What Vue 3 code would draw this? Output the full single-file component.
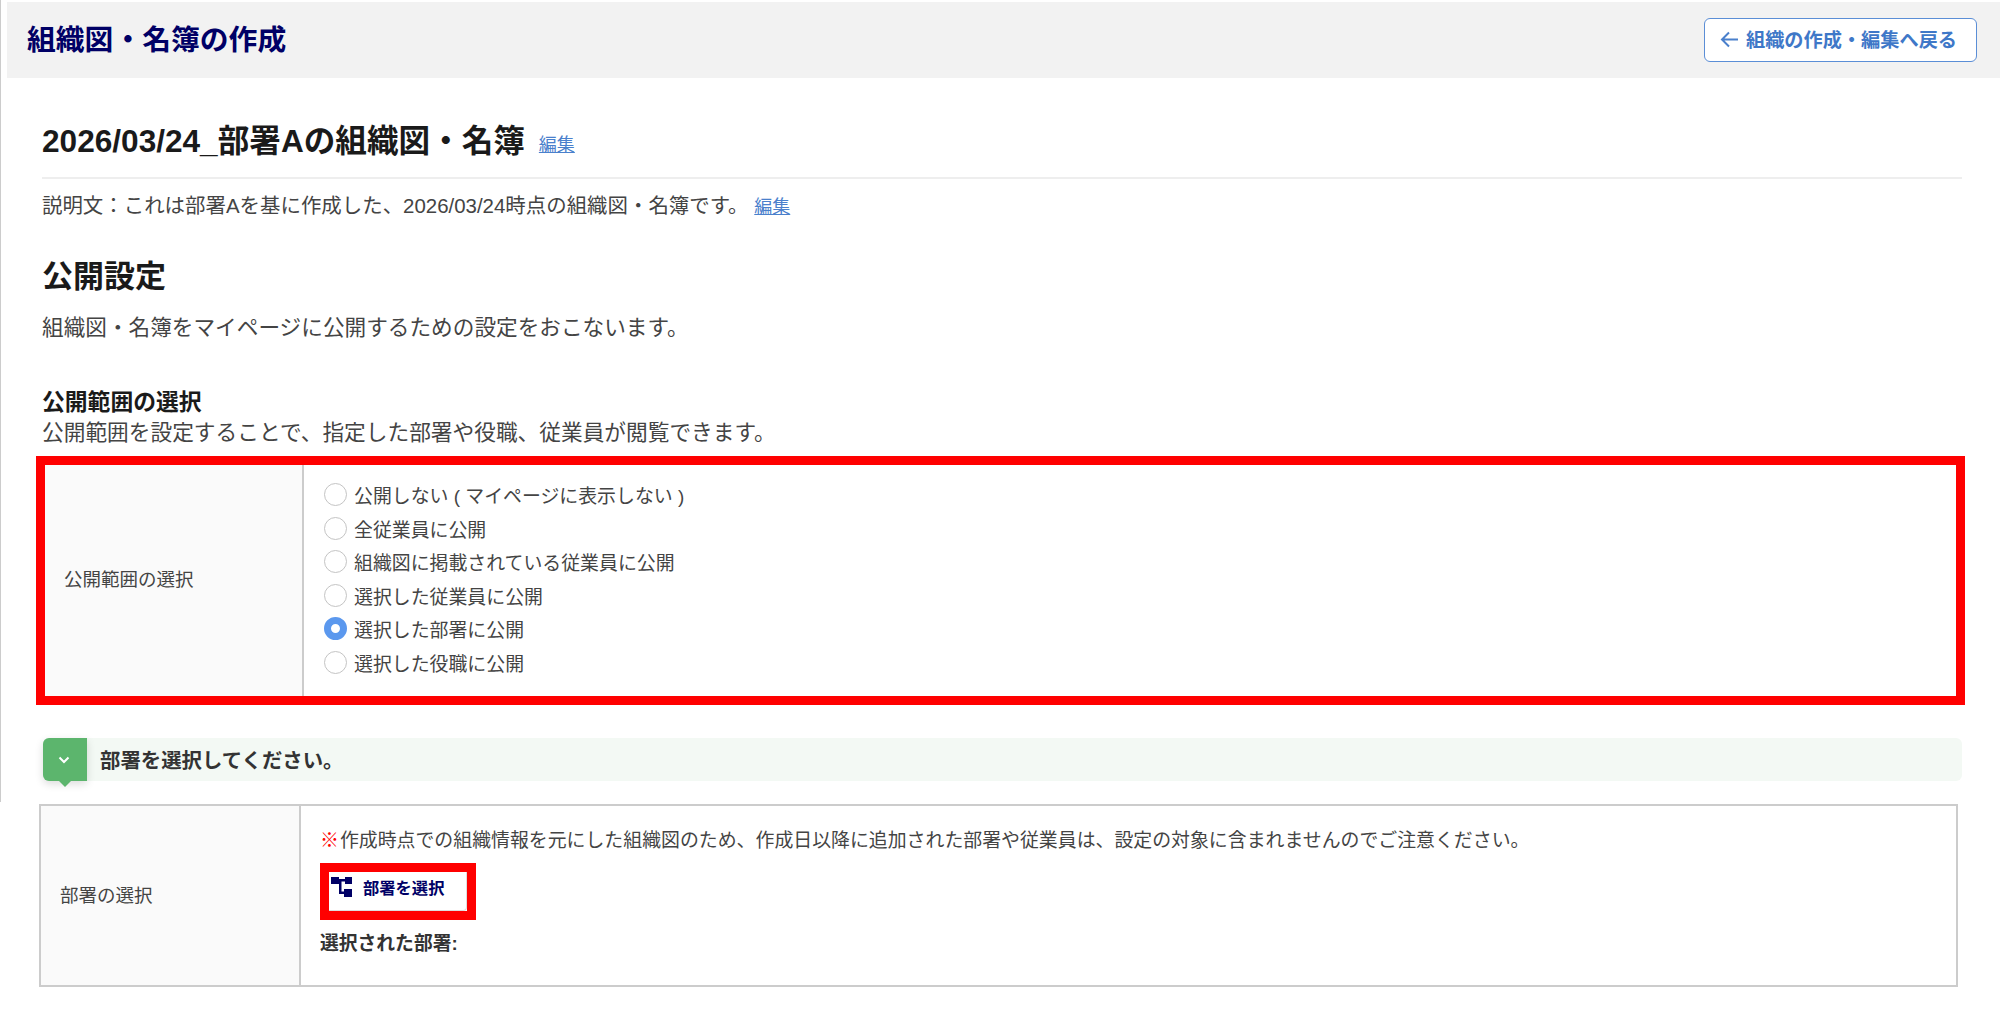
<script setup>
const options = [
  { label: '公開しない ( マイページに表示しない )', checked: false },
  { label: '全従業員に公開', checked: false },
  { label: '組織図に掲載されている従業員に公開', checked: false },
  { label: '選択した従業員に公開', checked: false },
  { label: '選択した部署に公開', checked: true },
  { label: '選択した役職に公開', checked: false },
]
</script>

<template>
  <div class="page">
    <div class="rail"></div>
    <header class="topbar">
      <h1 class="topbar-title">組織図・名簿の作成</h1>
      <button class="back" type="button">
        <svg width="18" height="17" viewBox="0 0 18 17" fill="none" stroke="#4a80cc" stroke-width="2">
          <path d="M18 8.500H2M9 1.500 2 8.500l7 7" />
        </svg>
        <span>組織の作成・編集へ戻る</span>
      </button>
    </header>

    <main class="main">
      <div class="doc-title">
        <h2>2026/03/24_部署Aの組織図・名簿</h2>
        <a class="edit">編集</a>
      </div>
      <p class="desc">説明文&#xFF1A;これは部署Aを基に作成した、2026/03/24時点の組織図・名簿です。 <a class="edit">編集</a></p>

      <h2 class="section">公開設定</h2>
      <p class="lead">組織図・名簿をマイページに公開するための設定をおこないます。</p>

      <h3 class="sub">公開範囲の選択</h3>
      <p class="sub-text">公開範囲を設定することで、指定した部署や役職、従業員が閲覧できます。</p>

      <div class="scope-box">
        <div class="row-label">公開範囲の選択</div>
        <div class="radios">
          <label v-for="o in options" :key="o.label" class="radio">
            <input type="radio" name="scope" :checked="o.checked" />
            <span>{{ o.label }}</span>
          </label>
        </div>
      </div>

      <div class="prompt">
        <div class="badge">
          <svg width="12" height="8" viewBox="0 0 12 8" fill="none" stroke="#fff" stroke-width="2">
            <path d="M1.500 1.500 6 6l4.500-4.500" />
          </svg>
        </div>
        <span>部署を選択してください。</span>
      </div>

      <div class="dept-table">
        <div class="row-label dept-label">部署の選択</div>
        <div class="dept-body">
          <p class="note"><span class="mark">※</span>作成時点での組織情報を元にした組織図のため、作成日以降に追加された部署や従業員は、設定の対象に含まれませんのでご注意ください。</p>
          <div class="pick-frame">
            <button class="pick" type="button">
              <svg width="21" height="20" viewBox="0 0 21 20" fill="#000066">
                <rect x="0" y="0" width="8" height="7" />
                <rect x="14" y="0" width="7" height="7" />
                <rect x="13" y="12" width="8" height="8" />
                <path d="M8 2h6v2.500h-3.500V14.500H13v2.500H8z" />
              </svg>
              <span>部署を選択</span>
            </button>
          </div>
          <p class="selected">選択された部署:</p>
        </div>
      </div>
    </main>
  </div>
</template>

<style scoped>
.page {
  position: relative;
  width: 2000px;
  height: 1012px;
  overflow: hidden;
  padding-top: 2px;
  box-sizing: border-box;
  background: #fff;
  color: #333;
  font-family: "Liberation Sans", "Noto Sans CJK JP", sans-serif;
}
.rail {
  position: absolute;
  left: 0;
  top: 0;
  width: 1px;
  height: 802px;
  background: #ccc;
}
h1, h2, h3, p { margin: 0; }
.topbar {
  margin-left: 7px;
  height: 76px;
  background: #f2f2f2;
  display: flex;
  align-items: center;
  justify-content: space-between;
  padding: 0 23px 0 20px;
}
.topbar-title {
  font-size: 28.800px;
  line-height: 40px;
  font-weight: 700;
  color: #000066;
}
.back {
  width: 273px;
  height: 44px;
  box-sizing: border-box;
  background: #fff;
  border: 1.500px solid #5b8ed6;
  border-radius: 6px;
  display: flex;
  align-items: center;
  gap: 8px;
  padding: 0 0 2px 15px;
  color: #3f78c8;
  font: inherit;
  font-size: 19.200px;
  font-weight: 700;
}
.main { padding: 0 38px 0 42px; }
.doc-title {
  height: 101px;
  padding-top: 27px;
  box-sizing: border-box;
  border-bottom: 2px solid #eee;
  display: flex;
  align-items: center;
  gap: 14px;
  color: #1a1a1a;
}
.doc-title h2 {
  font-size: 31.600px;
  line-height: 44px;
  font-weight: 700;
}
.edit {
  color: #4a80cc;
  font-size: 18px;
  text-decoration: underline;
  font-weight: 400;
}
.doc-title .edit { position: relative; top: 2px; }
.desc {
  margin-top: 12px;
  font-size: 20.450px;
  line-height: 30px;
  color: #444;
}
.section {
  margin-top: 33px;
  font-size: 31px;
  line-height: 44px;
  font-weight: 700;
  color: #1a1a1a;
}
.lead {
  margin-top: 13px;
  font-size: 21.650px;
  line-height: 32px;
  color: #444;
}
.sub {
  margin-top: 42px;
  font-size: 22.800px;
  line-height: 32px;
  font-weight: 700;
  color: #1a1a1a;
}
.sub-text {
  margin-top: 0;
  font-size: 21.700px;
  line-height: 30px;
  color: #444;
}
.scope-box {
  margin: 8px -3px 0 -6px;
  height: 249px;
  box-sizing: border-box;
  border: 9px solid #f00;
  display: flex;
}
.row-label {
  background: #fafafa;
  display: flex;
  align-items: center;
  font-size: 18.500px;
  color: #444;
}
.scope-box .row-label {
  width: 259px;
  padding: 0 0 6px 19px;
  box-sizing: border-box;
  border-right: 2px solid #ccc;
}
.radios {
  flex: 1;
  display: flex;
  flex-direction: column;
  padding: 13px 0 0 20px;
}
.radio {
  height: 33.500px;
  display: flex;
  align-items: center;
  gap: 7px;
  font-size: 18.900px;
  color: #444;
}
.radio input {
  appearance: none;
  margin: 0;
  width: 23px;
  height: 23px;
  box-sizing: border-box;
  border: 1.500px solid #c4c4c4;
  border-radius: 50%;
  background: #fff;
}
.radio input:checked {
  border: 7.500px solid #5b98ee;
}
.prompt {
  margin-top: 33px;
  height: 43px;
  margin-left: 1px;
  background: #f3f9f4;
  border-radius: 6px;
  display: flex;
  align-items: center;
  gap: 13px;
  font-size: 20.400px;
  font-weight: 700;
  color: #333;
}
.prompt > span { position: relative; top: -1px; }
.badge {
  position: relative;
  width: 44px;
  height: 43px;
  padding-right: 2px;
  box-sizing: border-box;
  background: #5cb56d;
  border-radius: 6px 0 0 6px;
  box-shadow: 0 3px 8px rgba(0, 0, 0, 0.14);
  display: flex;
  align-items: center;
  justify-content: center;
}
.badge::after {
  content: "";
  position: absolute;
  left: 16px;
  top: 43px;
  border-left: 6px solid transparent;
  border-right: 6px solid transparent;
  border-top: 6px solid #5cb56d;
}
.dept-table {
  margin: 23px 4px 0 -3px;
  height: 183px;
  box-sizing: border-box;
  border: 2px solid #ccc;
  display: flex;
}
.dept-label {
  width: 260px;
  padding: 0 0 4px 19px;
  box-sizing: border-box;
  border-right: 2px solid #ccc;
}
.dept-body {
  flex: 1;
  padding: 20px 0 0 19px;
}
.note {
  font-size: 18.900px;
  line-height: 30px;
  color: #444;
}
.mark { color: #f00; margin-right: 1px; }
.pick-frame {
  margin-top: 7px;
  width: 156px;
  height: 57px;
  box-sizing: border-box;
  border: 9px solid #f00;
}
.pick {
  width: 100%;
  height: 100%;
  background: #fff;
  border: 0;
  border-right: 1px solid #ddd;
  border-bottom: 1px solid #ddd;
  border-radius: 0 0 4px 0;
  display: flex;
  align-items: center;
  gap: 11px;
  padding: 0 0 9px 2px;
  font: inherit;
  font-size: 16.300px;
  font-weight: 700;
  color: #000066;
}
.selected {
  margin-top: 11px;
  font-size: 18.800px;
  line-height: 26px;
  font-weight: 700;
  color: #333;
}
</style>
